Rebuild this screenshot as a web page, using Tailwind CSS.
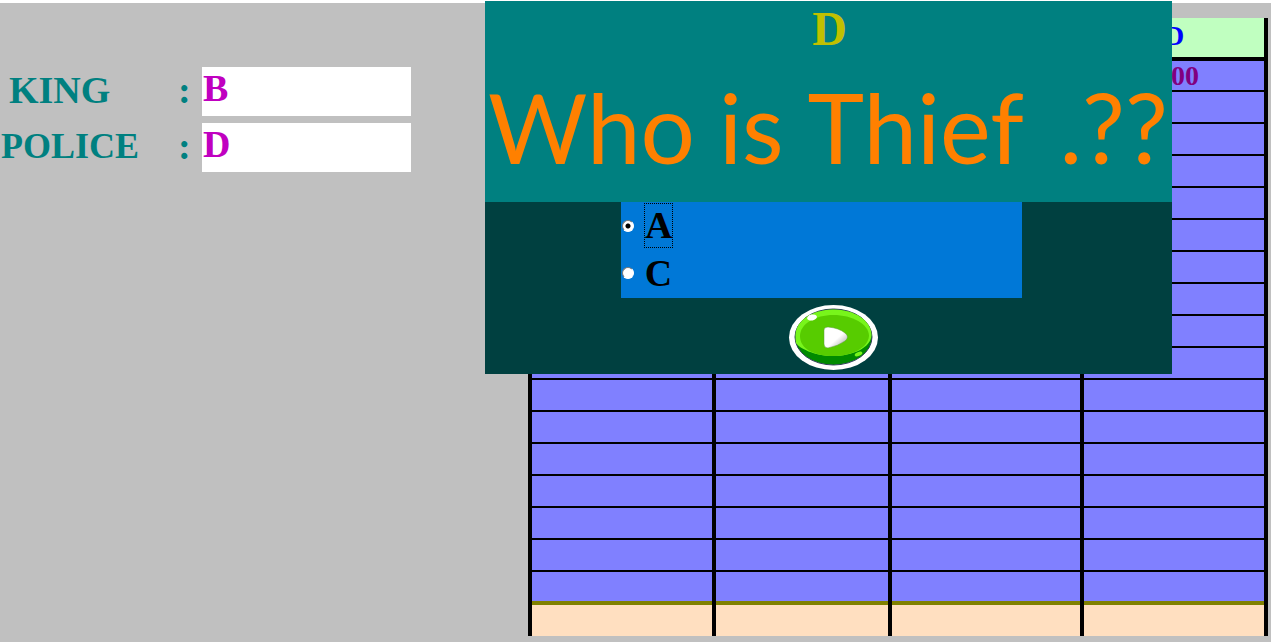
<!DOCTYPE html>
<html lang="en">
<head>
<meta charset="utf-8">
<meta name="viewport" content="width=device-width, initial-scale=1">
<title>Who is Thief</title>
<script src="https://cdn.jsdelivr.net/npm/@tailwindcss/browser@4"></script>
</head>
<body class="bg-[#c0c0c0]">
<main class="relative flex min-h-screen items-start justify-between bg-[linear-gradient(#fff_3px,#c0c0c0_3px)] pt-[3px] font-['Liberation_Serif',serif] font-bold">
  <form class="grid grid-cols-[178px_24px_209px] items-center gap-y-[7px] pt-16 text-[38px] leading-none text-[#008080] [&>label]:pb-1 [&>span]:pb-1">
    <label for="king" class="pl-[9px]">KING</label><span>:</span>
    <input id="king" value="B" readonly class="h-[49px] w-full bg-white px-px pb-2 text-[#c000c0] outline-none">
    <label for="police" class="pl-px text-[36px]">POLICE</label><span>:</span>
    <input id="police" value="D" readonly class="h-[49px] w-full bg-white px-px pb-2 text-[#c000c0] outline-none">
  </form>

  <table class="mt-[15px] mr-[3px] w-[740px] table-fixed border-separate border-spacing-0 border-l-4 border-black bg-[#8080ff] text-[28px] leading-none [&_td]:border-r-4 [&_td]:border-b-2 [&_td]:border-black [&_td]:p-0">
    <colgroup><col class="w-[184px]"><col class="w-[176px]"><col class="w-[192px]"><col class="w-[184px]"></colgroup>
    <thead>
      <tr class="h-[43px] text-[#0000ff] [&>th]:border-r-4 [&>th]:border-b-4 [&>th]:border-black [&>th]:bg-[#c0ffc0] [&>th]:p-0 [&>th]:pb-1"><th>A</th><th>B</th><th>C</th><th>D</th></tr>
    </thead>
    <tbody>
      <tr class="h-[31px] text-[#800080]"><td></td><td></td><td></td><td><div class="pl-2 text-center">800</div></td></tr>
      <tr class="h-8"><td></td><td></td><td></td><td></td></tr>
      <tr class="h-8"><td></td><td></td><td></td><td></td></tr>
      <tr class="h-8"><td></td><td></td><td></td><td></td></tr>
      <tr class="h-8"><td></td><td></td><td></td><td></td></tr>
      <tr class="h-8"><td></td><td></td><td></td><td></td></tr>
      <tr class="h-8"><td></td><td></td><td></td><td></td></tr>
      <tr class="h-8"><td></td><td></td><td></td><td></td></tr>
      <tr class="h-8"><td></td><td></td><td></td><td></td></tr>
      <tr class="h-8"><td></td><td></td><td></td><td></td></tr>
      <tr class="h-8"><td></td><td></td><td></td><td></td></tr>
      <tr class="h-8"><td></td><td></td><td></td><td></td></tr>
      <tr class="h-8"><td></td><td></td><td></td><td></td></tr>
      <tr class="h-8"><td></td><td></td><td></td><td></td></tr>
      <tr class="h-8"><td></td><td></td><td></td><td></td></tr>
      <tr class="h-8"><td></td><td></td><td></td><td></td></tr>
      <tr class="h-[29px] [&>td]:border-b-0"><td></td><td></td><td></td><td></td></tr>
    </tbody>
    <tfoot>
      <tr class="h-[35px] [&>td]:border-b-0 [&>td]:bg-[linear-gradient(#808000_4px,#ffdfc0_4px)] [&>td]:bg-clip-padding"><td></td><td></td><td></td><td></td></tr>
    </tfoot>
  </table>

  <section role="dialog" aria-labelledby="question" class="absolute top-px right-[99px] w-[687px] bg-[#004040]">
    <header class="h-[201px] bg-[#008080] pt-[2px]">
      <p class="pl-[2px] text-center text-[48px] leading-[52px] text-[#c0c000]">D</p>
      <h1 id="question" class="flex gap-6 pt-4 pr-1 pl-[3px] font-['Papyrus','Lato',sans-serif] text-[96px] leading-[112px] font-normal text-[#ff8000]"><span>Who</span> <span>is</span> <span>Thief</span> <span class="ml-auto">.??</span></h1>
    </header>
    <fieldset class="ml-[136px] w-[401px] bg-[#0078d7] text-[38px] leading-[44px] text-black">
      <div class="flex h-12 items-center gap-[10px] pb-px pl-px">
        <input type="radio" id="a" name="thief" checked class="size-3 appearance-none rounded-full border border-[#777] border-r-white border-b-white bg-white bg-[radial-gradient(circle,#000_2px,transparent_3px)]">
        <label for="a" class="w-[29px] border border-dotted border-black text-center leading-[43px]">A</label>
      </div>
      <div class="flex h-12 items-center gap-[10px] pb-[2px] pl-px">
        <input type="radio" id="c" name="thief" class="size-3 appearance-none rounded-full border border-[#777] border-r-white border-b-white bg-white">
        <label for="c" class="w-[29px] text-center">C</label>
      </div>
    </fieldset>
    <button type="button" aria-label="Play" class="mt-[7px] mb-1 ml-[303px] block">
      <svg width="91" height="65" viewBox="0 0 91 65">
        <defs><linearGradient id="play" x1="0" y1="0" x2="1" y2="1"><stop offset=".55" stop-color="#fff"/><stop offset="1" stop-color="#999"/></linearGradient></defs>
        <ellipse cx="45.500" cy="32.500" rx="44.500" ry="32.500" fill="#fff"/>
        <ellipse cx="45.500" cy="32" rx="38.500" ry="28" fill="#008a00" stroke="#30405a"/>
        <path d="M7.500 30C7.500 16 24 4.500 45.500 4.500S83.500 16 83.500 30C83 43 64 51 45 51S11 43 8 38Q7.500 35 7.500 30Z" fill="#78f51b"/>
        <path d="M12 31C12 19 27 10 45.500 10S81 19 81 31C80 43 64 51 45 51S12 44 12 31Z" fill="#57cc00"/>
        <ellipse cx="24" cy="12.500" rx="5" ry="3" transform="rotate(-12 24 12.500)" fill="#fff"/>
        <ellipse cx="70.500" cy="49" rx="4" ry="2" transform="rotate(-22 70.500 49)" fill="#78f51b"/>
        <path d="M36 25Q36 22 40 22Q51 23 57 28Q62 32 57 36Q50 41 40 43Q36 43 36 39Z" fill="url(#play)" stroke="#5b9a38" stroke-width=".5"/>
      </svg>
    </button>
  </section>
</main>
</body>
</html>
